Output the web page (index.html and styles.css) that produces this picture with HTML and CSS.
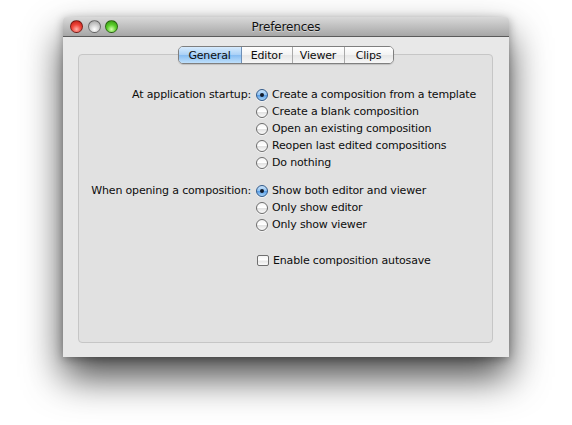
FILE: index.html
```html
<!DOCTYPE html>
<html>
<head>
<meta charset="utf-8">
<title>Preferences</title>
<link rel="stylesheet" href="styles.css">
</head>
<body>
<div class="stage">
  <div class="window">
    <div class="titlebar">
      <div class="lights">
        <span class="light red"></span>
        <span class="light gray"></span>
        <span class="light green"></span>
      </div>
      <div class="title">Preferences</div>
      <div></div>
    </div>
    <div class="wbody">
      <div class="tabs">
        <div class="tab sel w1">General</div>
        <div class="tab w2">Editor</div>
        <div class="tab w3">Viewer</div>
        <div class="tab w4">Clips</div>
      </div>
      <div class="panel">
        <div class="form">
          <div class="label">At application startup:</div>
          <div class="opts">
            <div class="opt"><span class="radio on"></span><span>Create a composition from a template</span></div>
            <div class="opt"><span class="radio"></span><span>Create a blank composition</span></div>
            <div class="opt"><span class="radio"></span><span>Open an existing composition</span></div>
            <div class="opt"><span class="radio"></span><span>Reopen last edited compositions</span></div>
            <div class="opt"><span class="radio"></span><span>Do nothing</span></div>
          </div>
          <div class="label g2">When opening a composition:</div>
          <div class="opts g2">
            <div class="opt"><span class="radio on"></span><span>Show both editor and viewer</span></div>
            <div class="opt"><span class="radio"></span><span>Only show editor</span></div>
            <div class="opt"><span class="radio"></span><span>Only show viewer</span></div>
          </div>
          <div></div>
          <div class="opts g3">
            <div class="opt"><span class="check"></span><span>Enable composition autosave</span></div>
          </div>
        </div>
      </div>
    </div>
  </div>
</div>
</body>
</html>
```
FILE: styles.css
```css
html, body {
  margin: 0;
  padding: 0;
  background: #ffffff;
}
body {
  font-family: "DejaVu Sans", "Liberation Sans", sans-serif;
  font-size: 11px;
  letter-spacing: -0.16px;
  color: #0d0d0d;
  width: 572px;
  height: 425px;
  overflow: hidden;
}
.stage {
  padding: 17px 0 0 63px;
}
.window {
  width: 446px;
  height: 340px;
  background: #e8e8e8;
  box-shadow: 0 20px 38px rgba(0,0,0,0.72), 0 2px 10px rgba(0,0,0,0.3);
  display: flex;
  flex-direction: column;
  border-radius: 4px 4px 0 0;
}
.titlebar {
  height: 19px;
  border-bottom: 1px solid #5a5a5a;
  background: linear-gradient(#d9d9d9, #bdbdbd 55%, #a6a6a6);
  border-radius: 4px 4px 0 0;
  display: grid;
  grid-template-columns: 1fr auto 1fr;
  align-items: center;
}
.lights {
  display: flex;
  gap: 4.5px;
  padding-left: 7px;
}
.light {
  width: 13px;
  height: 13px;
  border-radius: 50%;
  box-sizing: border-box;
  border: 1px solid rgba(0,0,0,0.45);
}
.red {
  background: radial-gradient(circle at 50% 75%, #ffb0a8 0%, #f0473c 45%, #b5130c 100%);
}
.gray {
  background: radial-gradient(circle at 50% 75%, #ffffff 0%, #d2d2d2 45%, #9a9a9a 100%);
}
.green {
  background: radial-gradient(circle at 50% 75%, #d6ffb0 0%, #5ccf2c 45%, #2e8a0a 100%);
}
.title {
  font-size: 12px;
  color: #111;
  text-shadow: 0 1px 0 rgba(255,255,255,0.45);
}
.wbody {
  flex: 1;
  padding: 9px 16px 14px 15px;
  display: flex;
  flex-direction: column;
}
.tabs {
  align-self: center;
  display: flex;
  height: 18px;
  margin-bottom: -10px;
  position: relative;
  z-index: 1;
  border: 1px solid #7f7f7f;
  border-radius: 5px;
  overflow: hidden;
  box-sizing: border-box;
  width: 216px;
  box-shadow: 0 1px 1px rgba(0,0,0,0.15);
}
.tab {
  box-sizing: border-box;
  display: flex;
  align-items: center;
  justify-content: center;
  font-size: 11px;
  background: linear-gradient(#ffffff, #f3f3f3 50%, #e6e6e6 51%, #f7f7f7);
  border-left: 1px solid #a9a9a9;
}
.tab:first-child { border-left: none; }
.tab.sel {
  background: linear-gradient(#d7ebfd, #a9d0f6 50%, #86bcf2 51%, #bfe0fb);
  border-right: 1px solid #6e8fb6;
}
.tab.sel + .tab { border-left: none; }
.w1 { width: 63px; }
.w2 { width: 50px; }
.w3 { width: 52px; }
.w4 { flex: 1; }
.panel {
  flex: 1;
  background: #e1e1e1;
  border: 1px solid #c6c6c6;
  border-radius: 4px;
  padding-top: 31px;
}
.form {
  display: grid;
  grid-template-columns: 172px 1fr;
  column-gap: 5px;
  align-items: start;
}
.label {
  text-align: right;
  height: 17px;
  line-height: 17px;
}
.opts {
  display: flex;
  flex-direction: column;
}
.g2 { margin-top: 11px; }
.g3 { margin-top: 19px; }
.opt {
  display: flex;
  align-items: center;
  height: 17px;
  gap: 4px;
}
.radio {
  width: 12px;
  height: 12px;
  box-sizing: border-box;
  border-radius: 50%;
  border: 1px solid #6d6d6d;
  background: linear-gradient(#f4f4f4, #ffffff 45%, #e3e3e3 55%, #fafafa);
  box-shadow: 0 1px 0 rgba(255,255,255,0.6);
  display: flex;
  align-items: center;
  justify-content: center;
}
.radio.on {
  border-color: #325a8a;
  background: linear-gradient(#c9e3fb, #8fc2f2 50%, #5a9ee6 55%, #a8d4f8);
}
.radio.on::after {
  content: "";
  width: 4px;
  height: 4px;
  border-radius: 50%;
  background: #111a2a;
}
.check {
  width: 12px;
  height: 11px;
  box-sizing: border-box;
  border: 1px solid #707070;
  border-radius: 2px;
  background: linear-gradient(#f4f4f4, #ffffff 45%, #e6e6e6 55%, #fafafa);
  margin-left: 1px;
}
```
